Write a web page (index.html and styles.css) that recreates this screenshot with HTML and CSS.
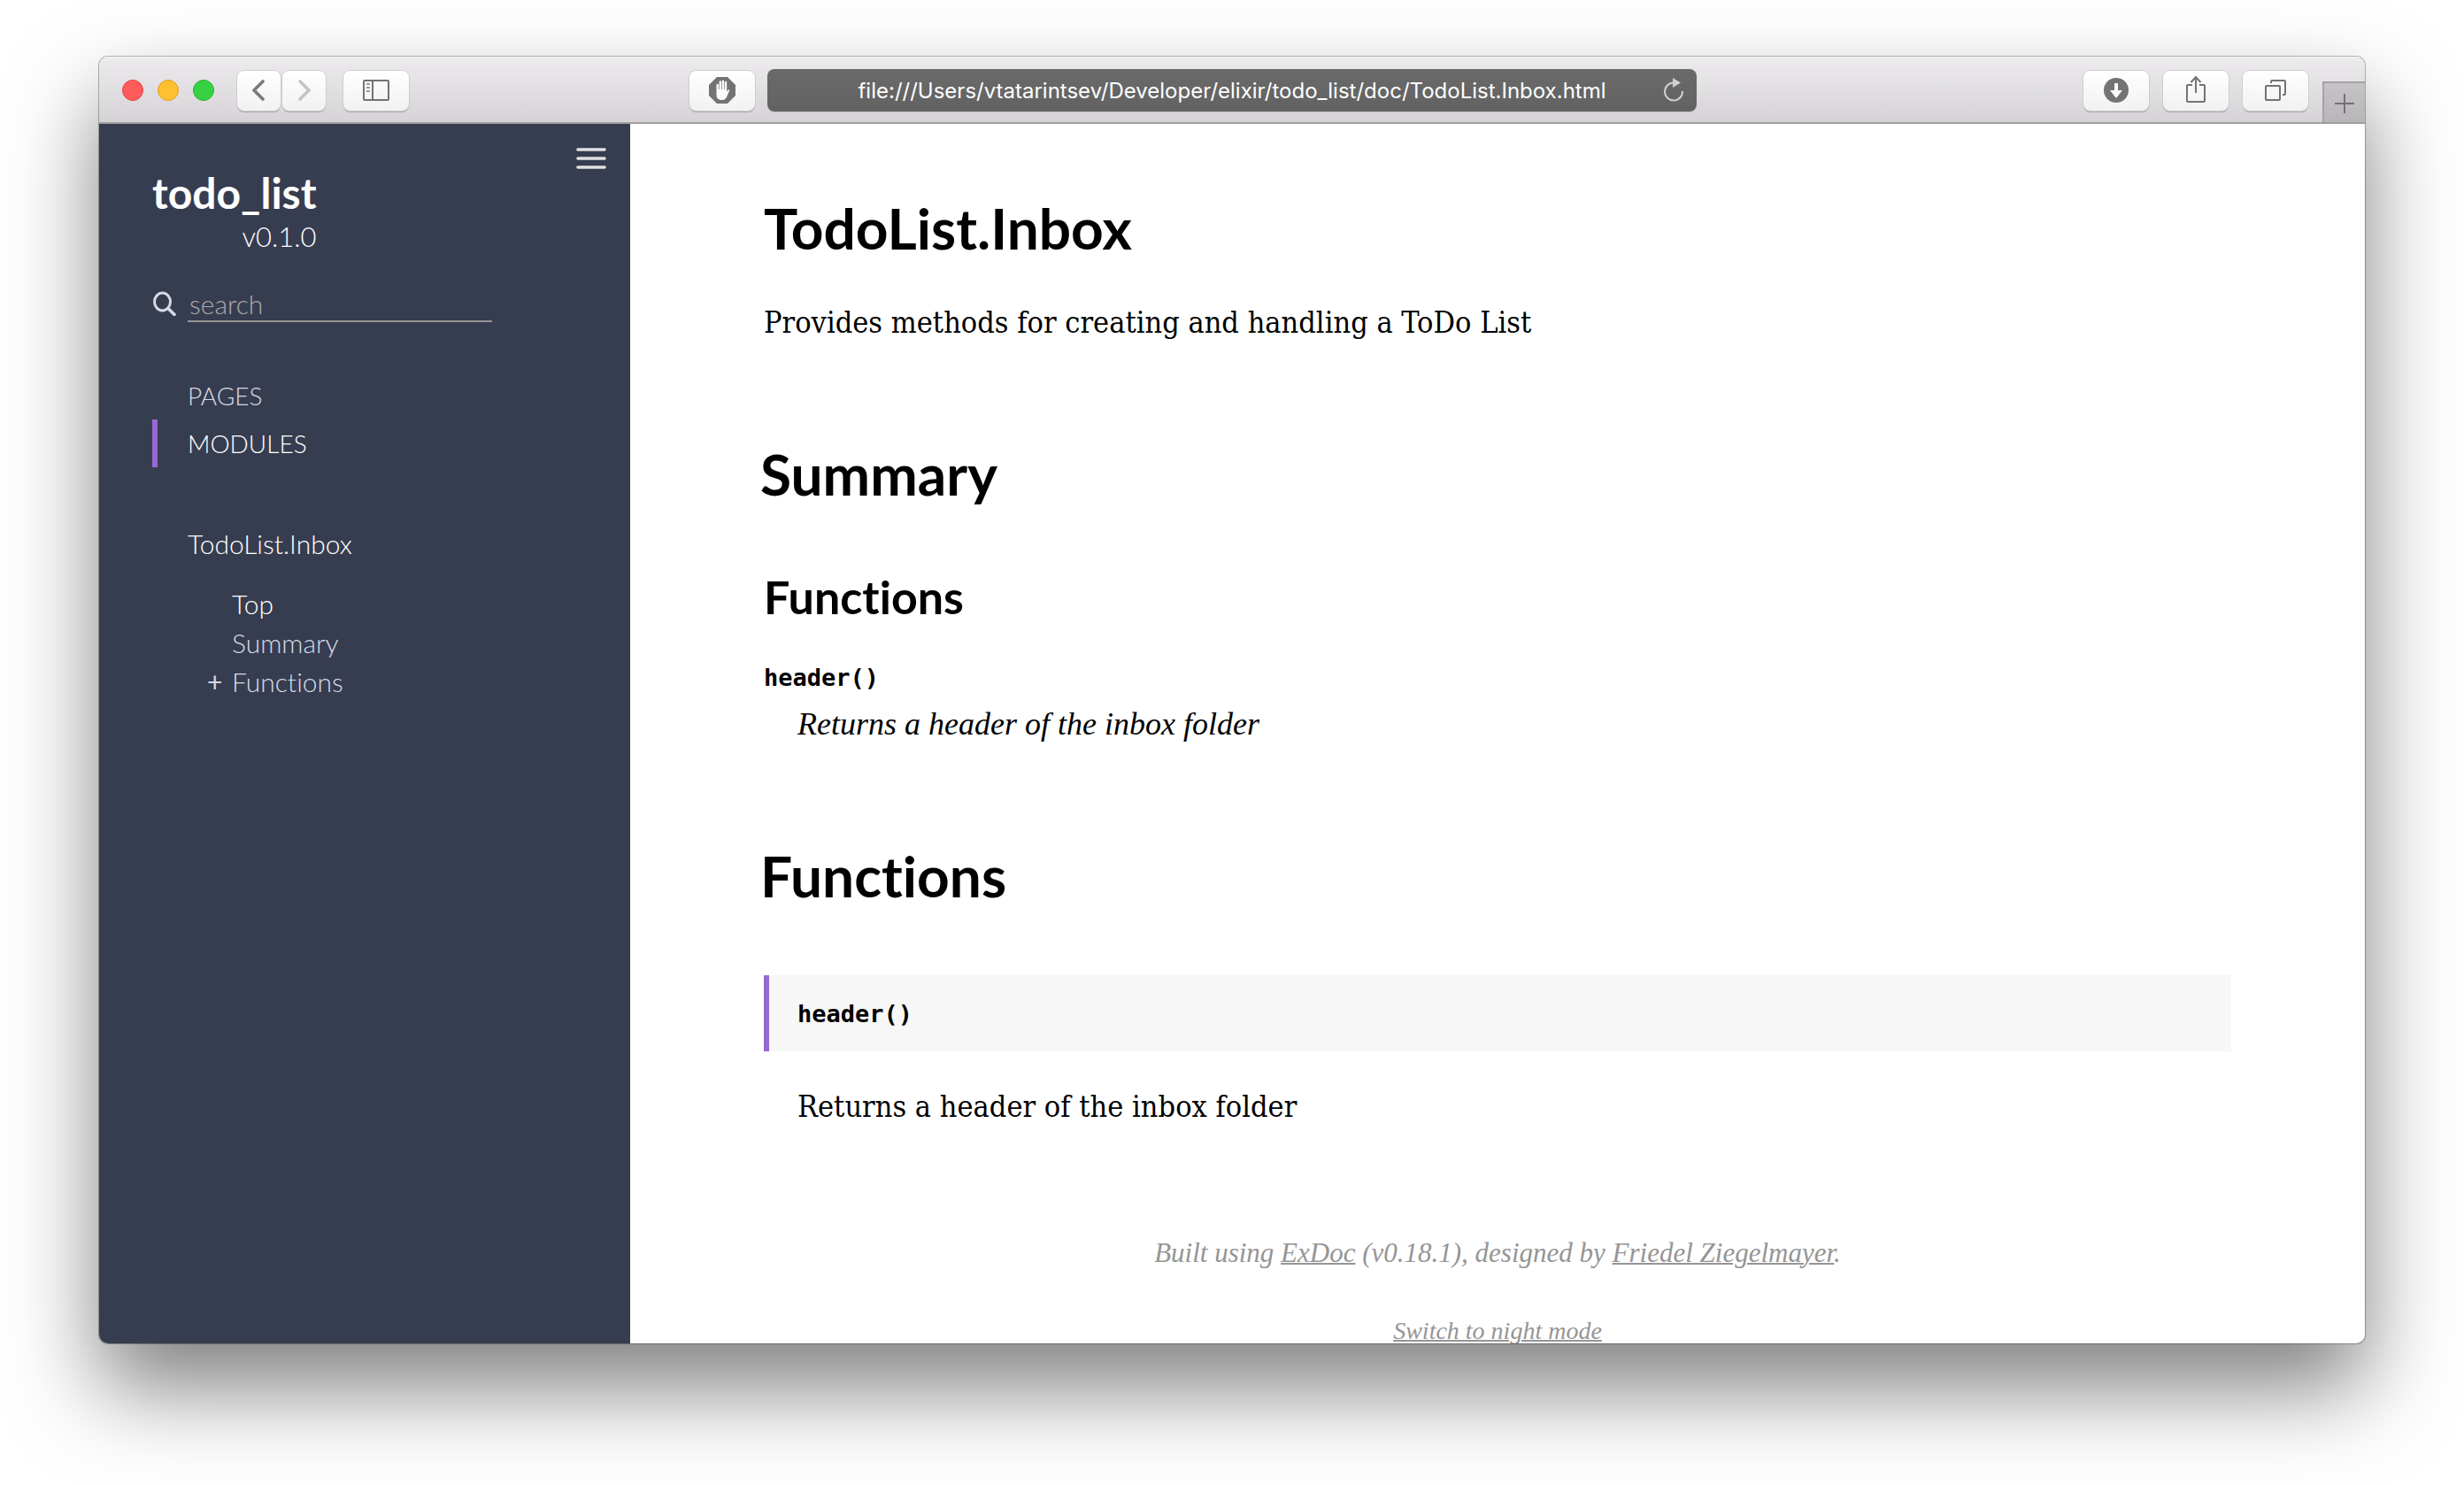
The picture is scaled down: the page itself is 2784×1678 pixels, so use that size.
FILE: index.html
```html
<!DOCTYPE html>
<html lang="en">
<head>
<meta charset="utf-8">
<title>TodoList.Inbox – todo_list v0.1.0</title>
<link rel="stylesheet" href="styles.css">
</head>
<body>
<div class="window">
  <header class="toolbar">
    <div class="toolbar-left">
      <div class="lights">
        <span class="light light-close"></span>
        <span class="light light-minimize"></span>
        <span class="light light-zoom"></span>
      </div>
      <div class="history">
        <button class="tool tool-narrow" type="button" aria-label="Back">
          <svg width="16" height="26" viewBox="0 0 16 26"><path d="M11 3 1 13l10 10" fill="none" stroke="#7a7a7a" stroke-width="3.6" stroke-linecap="round" transform="translate(1)"/></svg>
        </button>
        <button class="tool tool-narrow" type="button" aria-label="Forward">
          <svg width="16" height="26" viewBox="0 0 16 26"><path d="M3 3l10 10L3 23" fill="none" stroke="#c4c4c4" stroke-width="3.6" stroke-linecap="round"/></svg>
        </button>
      </div>
      <button class="tool" type="button" aria-label="Show sidebar">
        <svg width="30" height="24" viewBox="0 0 30 24" fill="none" stroke="#737373" stroke-width="2"><rect x="1" y="1" width="28" height="22" rx="1"/><path d="M11 1v22"/><path d="M4 5h4M4 9h4M4 13h4" stroke="#9a9a9a"/></svg>
      </button>
      <button class="tool tool-blocker" type="button" aria-label="Content blocker">
        <svg width="30" height="30" viewBox="0 0 30 30"><path d="M9 0h12l9 9v12l-9 9H9l-9-9V9z" fill="#737373"/><path d="M8.500 21V9a1.200 1.200 0 0 1 2.400 0v5h.7V5.500a1.200 1.200 0 0 1 2.400 0V14h.7V4.800a1.200 1.200 0 0 1 2.400 0V14h.7V6a1.200 1.200 0 0 1 2.400 0v10.500l1.400-1.800c.9-1 2.100-.3 1.500.9l-3 6.900c-1 2.400-2.800 3.500-5.400 3.500-3.600 0-6.200-1.900-6.200-5z" fill="#fafafa"/></svg>
      </button>
    </div>
    <div class="address">
      <span class="address-text">file:///Users/vtatarintsev/Developer/elixir/todo_list/doc/TodoList.Inbox.html</span>
      <button class="reload" type="button" aria-label="Reload">
        <svg width="24" height="28" viewBox="0 0 24 28"><path d="M12 5.500A10 10 0 1 0 22 15" fill="none" stroke="#cfcfcf" stroke-width="2"/><path d="M11 0v11l9-5.500z" fill="#cfcfcf"/></svg>
      </button>
    </div>
    <div class="toolbar-right">
      <button class="tool" type="button" aria-label="Downloads">
        <svg width="28" height="28" viewBox="0 0 28 28"><circle cx="14" cy="14" r="14" fill="#737373"/><path d="M12 6h4v8h5l-7 9-7-9h5z" fill="#fafafa"/></svg>
      </button>
      <button class="tool" type="button" aria-label="Share">
        <svg class="share-icon" width="24" height="32" viewBox="0 0 24 32" fill="none" stroke="#737373" stroke-width="2"><path d="M8 11H3a1 1 0 0 0-1 1v17a1 1 0 0 0 1 1h18a1 1 0 0 0 1-1V12a1 1 0 0 0-1-1h-5M12 20V3M6.500 8 12 2l5.500 6"/></svg>
      </button>
      <button class="tool" type="button" aria-label="Show all tabs">
        <svg width="26" height="26" viewBox="0 0 26 26" fill="none" stroke="#737373" stroke-width="2"><rect x="2" y="8" width="16" height="16" rx="1"/><path d="M8 5V3a1 1 0 0 1 1-1h14a1 1 0 0 1 1 1v14a1 1 0 0 1-1 1h-2"/></svg>
      </button>
      <button class="new-tab" type="button" aria-label="New tab">
        <svg width="22" height="22" viewBox="0 0 22 22"><path d="M11 0v22M0 11h22" stroke="#737173" stroke-width="2"/></svg>
      </button>
    </div>
  </header>

  <div class="page">
    <nav class="sidebar" aria-label="Documentation">
      <div class="sidebar-head">
        <div class="project">
          <a class="project-name" href="#top">todo_list</a>
          <span class="project-version">v0.1.0</span>
        </div>
        <button class="menu" type="button" aria-label="Toggle sidebar">
          <svg width="34" height="24" viewBox="0 0 34 24"><path d="M2 2h30M2 12h30M2 22h30" stroke="#e1e1e1" stroke-width="3.600" stroke-linecap="round"/></svg>
        </button>
      </div>
      <form class="search">
        <label class="search-label" for="search" aria-label="Search">
          <svg width="28" height="28" viewBox="0 0 28 28" fill="none" stroke="#d5dae6" stroke-width="3"><ellipse cx="11.500" cy="12" rx="9" ry="10"/><path d="M18 19.500 25 26.500" stroke-width="3.500" stroke-linecap="round"/></svg>
        </label>
        <input class="search-input" id="search" type="text" placeholder="search">
      </form>
      <ul class="sections">
        <li><a class="section" href="#pages">PAGES</a></li>
        <li><a class="section section-current" href="#modules">MODULES</a></li>
      </ul>
      <a class="module" href="#top">TodoList.Inbox</a>
      <ul class="module-parts">
        <li><a class="part part-current" href="#top">Top</a></li>
        <li><a class="part" href="#summary">Summary</a></li>
        <li><a class="part part-closed" href="#functions">Functions</a></li>
      </ul>
    </nav>

    <main class="content" id="top">
      <h1 class="title">TodoList.Inbox</h1>
      <p class="text">Provides methods for creating and handling a ToDo List</p>

      <h2 class="heading" id="summary">Summary</h2>
      <h3 class="subheading">Functions</h3>
      <a class="signature" href="#header">header()</a>
      <p class="synopsis">Returns a header of the inbox folder</p>

      <h2 class="heading" id="functions">Functions</h2>
      <div class="detail" id="header"><span class="detail-signature">header()</span></div>
      <p class="text detail-text">Returns a header of the inbox folder</p>

      <footer class="footer">
        <p class="credits">Built using <a href="#exdoc">ExDoc</a> (v0.18.1), designed by <a href="#designer">Friedel Ziegelmayer</a>.</p>
        <button class="night" type="button">Switch to night mode</button>
      </footer>
    </main>
  </div>
</div>
</body>
</html>
```
FILE: styles.css
```css
* {
  box-sizing: border-box;
}

body {
  margin: 0;
  height: 100vh;
  padding: 64px 112px 160px;
  background: #fff;
  font-family: Lato, sans-serif;
  font-variant-ligatures: none;
  overflow: hidden;
}

h1, h2, h3, p, ul {
  margin: 0;
  padding: 0;
}

ul {
  list-style: none;
}

a {
  color: inherit;
  text-decoration: none;
}

button {
  margin: 0;
  padding: 0;
  border: 0;
  background: none;
  font: inherit;
  color: inherit;
}

svg {
  display: block;
}

/* Browser window */

.window {
  display: flex;
  flex-direction: column;
  height: 100%;
  border-radius: 10px;
  overflow: hidden;
  background: #fff;
  box-shadow: 0 0 0 1px rgba(0, 0, 0, 0.28), 0 50px 100px rgba(0, 0, 0, 0.5);
}

.toolbar {
  display: grid;
  grid-template-columns: 1fr 41% 1fr;
  align-items: center;
  flex: none;
  height: 76px;
  border-bottom: 2px solid #a09da1;
  background: linear-gradient(#edebee, #d6d3d7);
  box-shadow: inset 0 1px #f8f7f8;
}

.toolbar-left,
.toolbar-right {
  display: flex;
  align-items: center;
  height: 100%;
}

.toolbar-left {
  padding: 2px 14px 0 26px;
}

.lights {
  display: flex;
  gap: 16px;
  margin-right: 26px;
}

.light {
  width: 24px;
  height: 24px;
  border: 1px solid;
  border-radius: 50%;
}

.light-close {
  background: #ff5b5a;
  border-color: #e04344;
}

.light-minimize {
  background: #ffbf2f;
  border-color: #dfa023;
}

.light-zoom {
  background: #37d242;
  border-color: #27b232;
}

.history {
  display: flex;
  gap: 2px;
  margin-right: 20px;
}

.tool {
  display: grid;
  place-items: center;
  width: 74px;
  height: 45px;
  border-radius: 8px;
  background: linear-gradient(#fff, #f1f1f1);
  box-shadow: 0 0 0 1px #cfccd0, 0 2px 1px #a9a6aa;
}

.tool-narrow {
  width: 49px;
}

.tool-blocker {
  margin-left: auto;
}

.address {
  display: flex;
  align-items: center;
  height: 48px;
  margin-top: 2px;
  padding: 0 14px 0 38px;
  border-radius: 8px;
  background: linear-gradient(#6a6a6a, #626262);
  box-shadow: 0 1px #c0bdc1;
  color: #fff;
  font: 400 24px/48px Inter, sans-serif;
}

.address-text {
  flex: 1;
  padding-top: 2px;
  text-align: center;
  white-space: nowrap;
}

.toolbar-right {
  justify-content: flex-end;
  gap: 16px;
  padding-top: 2px;
}

.share-icon {
  margin-bottom: 2px;
}

.new-tab {
  display: grid;
  place-items: center;
  align-self: flex-end;
  width: 48px;
  height: 46px;
  padding-top: 2px;
  border: solid #a5a2a6;
  border-width: 2px 0 0 2px;
  background: linear-gradient(#c6c3c7, #b9b6ba);
}

.page {
  display: flex;
  flex: 1;
  min-height: 0;
}

/* Documentation sidebar */

.sidebar {
  flex: none;
  width: 600px;
  padding: 0 27px 0 60px;
  background: #373d50;
  color: #d5dae6;
  font-weight: 300;
  font-size: 30px;
  line-height: 44px;
}

.sidebar-head {
  display: flex;
  justify-content: space-between;
  align-items: flex-start;
}

.project {
  display: flex;
  flex-direction: column;
  align-items: flex-end;
  padding-top: 50px;
  color: #fff;
}

.project-name {
  font-weight: 700;
  font-size: 48px;
  line-height: 56px;
}

.project-version {
  font-size: 31px;
  line-height: 42px;
}

.menu {
  padding-top: 27px;
}

.search {
  display: flex;
  align-items: center;
  gap: 12px;
  margin-top: 34px;
}

.search-input {
  width: 344px;
  height: 42px;
  padding: 2px 0 0 2px;
  border: 0;
  border-bottom: 2px solid #979797;
  border-radius: 0;
  outline: 0;
  background: transparent;
  color: #fff;
  font: 300 30px/38px Lato, sans-serif;
}

.search-input::placeholder {
  color: #a9a9a9;
  opacity: 1;
}

.sections {
  margin-top: 56px;
}

.section {
  display: block;
  padding-left: 34px;
  border-left: 6px solid transparent;
  font-size: 28px;
  line-height: 54px;
}

.section-current {
  border-color: #9768d1;
  color: #fff;
}

.module {
  display: block;
  margin-top: 64px;
  padding-left: 40px;
  color: #fff;
}

.module-parts {
  margin-top: 24px;
  padding-left: 62px;
}

.part {
  display: flex;
}

.part::before {
  content: "";
  width: 28px;
}

.part-closed::before {
  content: "+";
  font-weight: 400;
}

.part-current {
  color: #fff;
}

/* Documentation page */

.content {
  flex: 1;
  min-width: 0;
  padding: 78px 151px 0;
  overflow: hidden;
  color: #000;
}

.title,
.heading {
  font-size: 64px;
  line-height: 80px;
}

.heading {
  margin: 104px 0 0 -4px;
}

.text {
  margin-top: 38px;
  font: 34px/56px "DejaVu Serif Condensed", "DejaVu Serif", serif;
  font-stretch: condensed;
}

.subheading {
  margin-top: 66px;
  font-size: 52px;
  line-height: 64px;
}

.signature,
.detail-signature {
  font: 700 27px/48px "DejaVu Sans Mono", monospace;
}

.signature {
  display: block;
  margin-top: 36px;
}

.synopsis {
  padding-left: 38px;
  font: italic 36px/56px "Liberation Serif", serif;
}

.detail {
  display: flex;
  align-items: center;
  height: 86px;
  margin-top: 72px;
  padding: 2px 0 0 32px;
  border-left: 6px solid #9768d1;
  background: #f7f7f7;
}

.detail-text {
  margin-top: 34px;
  padding-left: 38px;
}

.footer {
  margin-top: 114px;
  color: #959595;
  font: italic 31px/48px "Liberation Serif", serif;
  text-align: center;
}

.footer a,
.night {
  text-decoration: underline;
  text-decoration-thickness: 2px;
}

.night {
  margin-top: 44px;
  font-size: 28px;
  line-height: 40px;
}
```
